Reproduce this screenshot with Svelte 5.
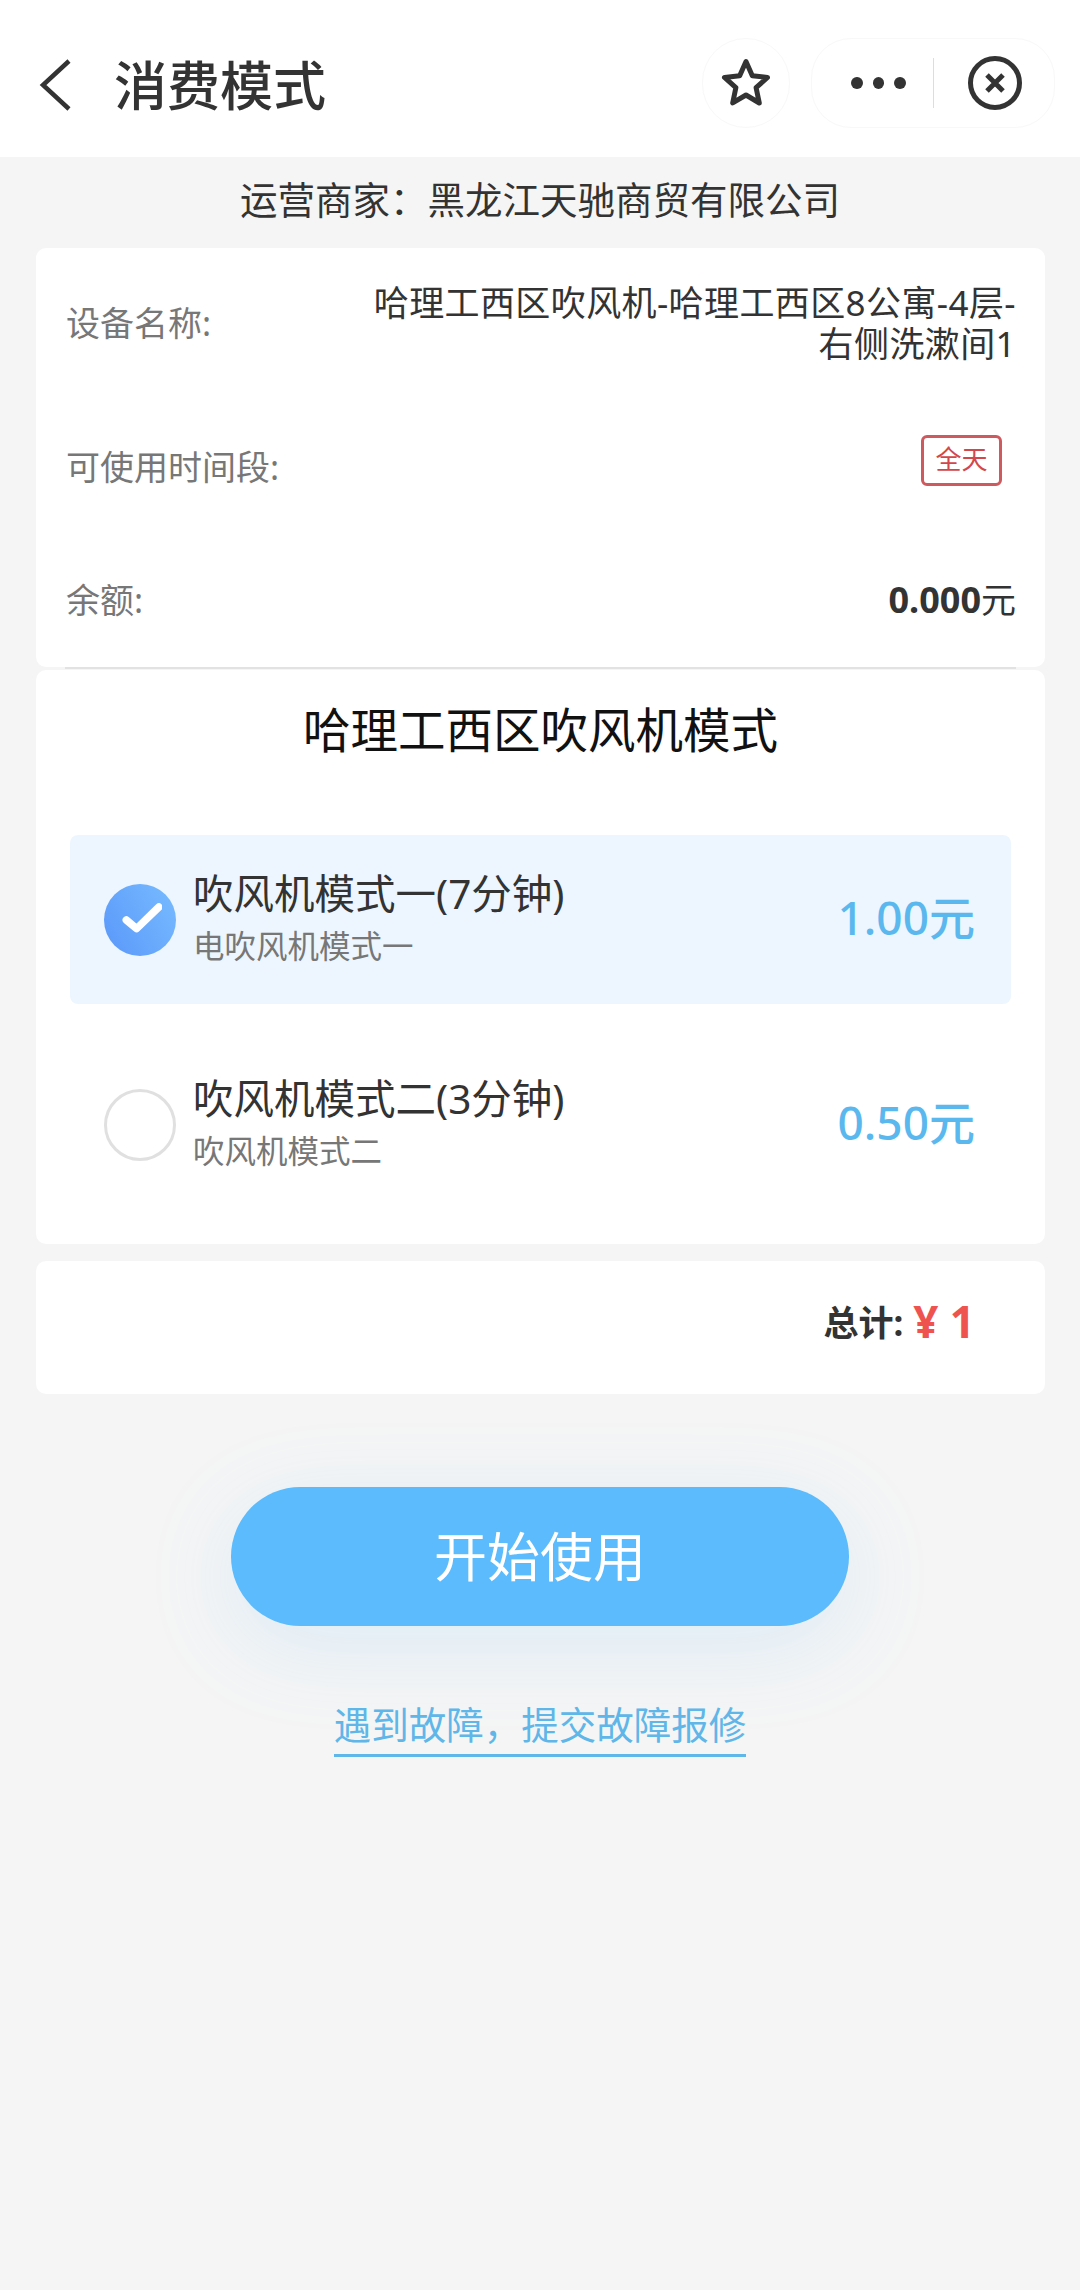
<script>
  const modes = [
    { id: 1, name: '吹风机模式一(7分钟)', desc: '电吹风机模式一', price: '1.00元' },
    { id: 2, name: '吹风机模式二(3分钟)', desc: '吹风机模式二', price: '0.50元' }
  ];
  let selected = $state(1);
</script>

<div class="page">
  <header class="nav">
    <svg class="back" width="34" height="54" viewBox="0 0 34 54"><path d="M31 3 5 27l26 24" fill="none" stroke="#333" stroke-width="4.500"/></svg>
    <h1>消费模式</h1>
    <div class="pill star">
      <svg width="52" height="52" viewBox="0 0 52 52"><path d="M26 4.500l6.300 14.300 15.200 1.600-11.400 10.300 3.200 15.300L26 38l-13.300 7.900 3.200-15.300L4.500 20.400l15.200-1.600z" fill="none" stroke="#333" stroke-width="5" stroke-linejoin="round"/></svg>
    </div>
    <div class="pill menu">
      <span class="dots"><i></i><i></i><i></i></span>
      <span class="sep"></span>
      <svg width="56" height="56" viewBox="0 0 56 56"><circle cx="28" cy="28" r="24.500" fill="none" stroke="#333" stroke-width="5"/><path d="M20 20l16 16M36 20 20 36" fill="none" stroke="#333" stroke-width="5"/></svg>
    </div>
  </header>

  <p class="operator">运营商家：黑龙江天驰商贸有限公司</p>

  <section class="card info">
    <div class="row first">
      <span class="label">设备名称:</span>
      <span class="value wide">哈理工西区吹风机-哈理工西区8公寓-4层-<br />右侧洗漱间1</span>
    </div>
    <div class="row second">
      <span class="label">可使用时间段:</span>
      <span class="tag">全天</span>
    </div>
    <div class="row third">
      <span class="label">余额:</span>
      <span class="value"><b>0.000</b>元</span>
    </div>
  </section>
  <div class="divider"></div>

  <section class="card modes">
    <h2>哈理工西区吹风机模式</h2>
    {#each modes as mode (mode.id)}
      <button class="mode" class:active={selected === mode.id} onclick={() => (selected = mode.id)}>
        {#if selected === mode.id}
          <span class="check">
            <svg width="44" height="36" viewBox="0 0 44 36"><path d="M8.300 18l10.300 8.600L40.900 5" fill="none" stroke="#fff" stroke-width="7.500" stroke-linecap="round" stroke-linejoin="round"/></svg>
          </span>
        {:else}
          <span class="radio"></span>
        {/if}
        <span class="text">
          <span class="name">{mode.name}</span>
          <span class="desc">{mode.desc}</span>
        </span>
        <span class="price">{mode.price}</span>
      </button>
    {/each}
  </section>

  <section class="card total">
    <span class="sum">总计:</span>
    <span class="money">¥ 1</span>
  </section>

  <button class="start">开始使用</button>
  <a class="repair" href="#repair">遇到故障，提交故障报修</a>
</div>

<style>
  :global(body) {
    background: #f5f5f5;
  }
  .page {
    min-height: 2290px;
    display: flex;
    flex-direction: column;
    background: #f5f5f5;
    color: #333;
    font-family: "Noto Sans", "Noto Sans CJK SC", sans-serif;
  }
  .nav {
    height: 157px;
    box-sizing: border-box;
    padding: 38px 25px 29px 38px;
    display: flex;
    align-items: center;
    background: #fff;
  }
  .back {
    flex: none;
    margin-top: 4px;
  }
  h1 {
    margin: 0 0 0 42px;
    flex: 1;
    font-size: 53px;
    font-weight: 500;
  }
  .pill {
    height: 90px;
    box-sizing: border-box;
    border: 1px solid #f8f8f8;
    border-radius: 45px;
    display: flex;
    align-items: center;
  }
  .star {
    width: 88px;
    justify-content: center;
    margin-right: 21px;
  }
  .menu {
    width: 244px;
    padding-left: 39px;
    border-radius: 40px;
  }
  .dots {
    display: flex;
    gap: 10px;
    width: 55px;
  }
  .dots i {
    width: 12px;
    height: 12px;
    border-radius: 50%;
    background: #333;
  }
  .sep {
    width: 1px;
    height: 50px;
    margin: 0 33px 0 27px;
    background: #ddd;
  }
  .operator {
    margin: 18px 0 23px;
    text-align: center;
    font-size: 37.500px;
    line-height: 50px;
  }
  .card {
    margin: 0 35px 0 36px;
    background: #fff;
    border-radius: 10px;
  }
  .info {
    height: 419px;
    box-sizing: border-box;
    padding: 33px 29px 0 30px;
  }
  .row {
    display: flex;
    justify-content: space-between;
  }
  .label {
    color: #777;
    font-size: 34px;
    margin-bottom: 2px;
  }
  .value {
    font-size: 35px;
    line-height: 41px;
    text-align: right;
  }
  .value.wide {
    letter-spacing: 0.400px;
  }
  .value b {
    font-size: 36px;
    font-weight: 700;
  }
  .first {
    height: 83px;
    align-items: center;
  }
  .second {
    height: 62px;
    margin-top: 71px;
    align-items: center;
  }
  .tag {
    align-self: flex-start;
    margin-right: 14px;
    width: 81px;
    height: 51px;
    box-sizing: border-box;
    border: 3px solid #cc5a5e;
    border-radius: 6px;
    color: #d2474c;
    font-size: 26px;
    line-height: 42px;
    text-align: center;
  }
  .third {
    height: 41px;
    margin-top: 82px;
    align-items: center;
  }
  .divider {
    height: 2px;
    margin: 0 64px 0 65px;
    background: #e2e2e2;
  }
  .modes {
    margin-top: 1px;
    padding: 30px 34px 36px;
    height: 574px;
    box-sizing: border-box;
  }
  h2 {
    margin: 0 0 75px;
    text-align: center;
    font-size: 47.500px;
    line-height: 60px;
    font-weight: 400;
    color: #111;
  }
  .mode {
    width: 100%;
    height: 169px;
    margin-bottom: 36px;
    padding: 0 36px 0 34px;
    display: flex;
    align-items: center;
    border: 0;
    border-radius: 8px;
    background: transparent;
    color: inherit;
    font-family: inherit;
    text-align: left;
  }
  .mode.active {
    background: #edf6fe;
  }
  .check,
  .radio {
    flex: none;
    width: 72px;
    height: 72px;
    box-sizing: border-box;
    border-radius: 50%;
  }
  .check {
    display: flex;
    align-items: center;
    justify-content: center;
    background: linear-gradient(60deg, #5a97fa, #78bcff);
  }
  .radio {
    border: 3px solid #e0e0e0;
    background: #fff;
  }
  .text {
    flex: 1;
    margin-left: 17px;
    padding-bottom: 6px;
    display: flex;
    flex-direction: column;
  }
  .name {
    font-size: 40.500px;
    line-height: 52px;
  }
  .desc {
    margin-top: 6px;
    color: #777;
    font-size: 31.500px;
    line-height: 40px;
  }
  .price {
    margin-bottom: 9px;
    color: #5bb8ee;
    font-size: 46px;
    font-weight: 500;
  }
  .total {
    margin-top: 17px;
    height: 133px;
    box-sizing: border-box;
    padding: 0 70px 14px 0;
    display: flex;
    align-items: center;
    justify-content: flex-end;
    gap: 10px;
  }
  .sum {
    font-size: 35px;
    font-weight: 700;
  }
  .money {
    color: #ef5350;
    font-size: 44px;
    font-weight: 700;
  }
  .start {
    align-self: center;
    width: 618px;
    height: 139px;
    margin-top: 93px;
    padding-bottom: 5px;
    border: 0;
    border-radius: 70px;
    background: #5bbbfc;
    color: #fff;
    font-family: inherit;
    font-size: 53px;
    box-shadow: 0 20px 90px rgba(91, 187, 252, 0.16);
  }
  .repair {
    align-self: center;
    margin-top: 72px;
    padding-bottom: 2px;
    border-bottom: 3px solid #5fb6e8;
    color: #5fb6e8;
    font-size: 37.500px;
    line-height: 54px;
    text-decoration: none;
  }
</style>
